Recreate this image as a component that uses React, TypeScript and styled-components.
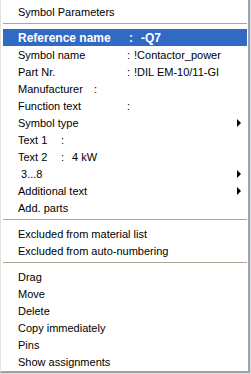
import React from 'react';
import styled, {createGlobalStyle} from "styled-components";

const GlobalStyle = createGlobalStyle`
  html, body {
    margin: 0;
    padding: 0;
    background: #d6dbe3;
  }
`;

const Page = styled.div`
  width: 251px;
  height: 374px;
  overflow: hidden;
  background: #d6dbe3;
`;

const Menu = styled.div`
  width: 245px;
  padding: 3px 0 1px 2px;
  background: #fff;
  border-left: 1px solid #e4e2dc;
  border-right: 2px solid #a2a29e;
  border-bottom: 2px solid #a2a29e;
  font-family: "Liberation Sans", Arial, sans-serif;
  font-size: 11px;
  color: #000;
`;

const Item = styled.div<{ $active?: boolean }>`
  display: flex;
  align-items: center;
  height: 17px;
  margin-right: 1px;
  padding: 0 6px 0 15px;
  white-space: pre;
  background: ${p => p.$active ? '#316ac5' : 'transparent'};
  color: ${p => p.$active ? '#fff' : '#000'};
  font-weight: ${p => p.$active ? 'bold' : 'normal'};
  font-size: ${p => p.$active ? '12px' : '11px'};
`;

const Label = styled.span<{ $width: number }>`
  display: inline-block;
  width: ${p => p.$width}px;
`;

const Value = styled.span<{ $gap: number }>`
  margin-left: ${p => p.$gap}px;
`;

const Arrow = styled.span`
  margin-left: auto;
  width: 0;
  height: 0;
  border-left: 4px solid #000;
  border-top: 4px solid transparent;
  border-bottom: 4px solid transparent;
`;

const Separator = styled.div`
  height: 9px;
  margin-right: 1px;
  display: flex;
  flex-direction: column;
  &::before {
    content: "";
    margin-top: 3px;
    height: 1px;
    background: #aca899;
  }
`;

type Field = { label: string; colon: number; value?: string; gap?: number; active?: boolean };

const fields: Field[] = [
  {label: 'Reference name', colon: 111, value: '-Q7', gap: 8, active: true},
  {label: 'Symbol name', colon: 109, value: '!Contactor_power', gap: 4},
  {label: 'Part Nr.', colon: 109, value: '!DIL EM-10/11-GI', gap: 4},
  {label: 'Manufacturer', colon: 76},
  {label: 'Function text', colon: 109},
];

const App = () => {
  return (
    <Page>
      <GlobalStyle/>
      <Menu>
        <Item>Symbol Parameters</Item>
        <Separator/>
        {fields.map(f => (
          <Item key={f.label} $active={f.active}>
            <Label $width={f.colon}>{f.label}</Label>:
            {f.value && <Value $gap={f.gap || 4}>{f.value}</Value>}
          </Item>
        ))}
        <Item>Symbol type<Arrow/></Item>
        <Item><Label $width={43}>Text 1</Label>:</Item>
        <Item><Label $width={43}>Text 2</Label>:<Value $gap={8}>4 kW</Value></Item>
        <Item> 3...8<Arrow/></Item>
        <Item>Additional text<Arrow/></Item>
        <Item>Add. parts</Item>
        <Separator/>
        <Item>Excluded from material list</Item>
        <Item>Excluded from auto-numbering</Item>
        <Separator/>
        <Item>Drag</Item>
        <Item>Move</Item>
        <Item>Delete</Item>
        <Item>Copy immediately</Item>
        <Item>Pins</Item>
        <Item>Show assignments</Item>
      </Menu>
    </Page>
  );
};

export default App;
